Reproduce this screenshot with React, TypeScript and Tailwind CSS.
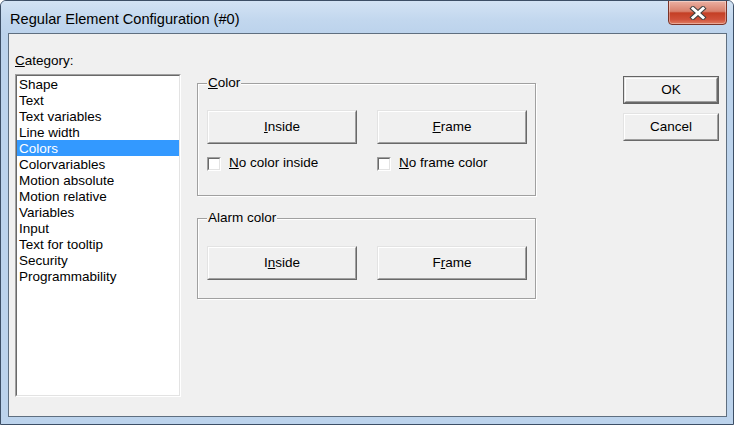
import React from "react";

const categories = [
  "Shape",
  "Text",
  "Text variables",
  "Line width",
  "Colors",
  "Colorvariables",
  "Motion absolute",
  "Motion relative",
  "Variables",
  "Input",
  "Text for tooltip",
  "Security",
  "Programmability",
];

function Button({
  children,
  w = "w-[150px]",
  h = "h-[34px]",
  isDefault = false,
}: {
  children: React.ReactNode;
  w?: string;
  h?: string;
  isDefault?: boolean;
}) {
  const body = (
    <div className="h-full w-full border border-t-[#e3e3e3] border-l-[#e3e3e3] border-r-[#696969] border-b-[#696969]">
      <div className="h-full w-full border border-t-white border-l-white border-r-[#a0a0a0] border-b-[#a0a0a0] flex items-center justify-center bg-[#f0f0f0]">
        <span>{children}</span>
      </div>
    </div>
  );
  if (isDefault) {
    return <div className={`${w} ${h} border border-[#646464]`}>{body}</div>;
  }
  return <div className={`${w} ${h}`}>{body}</div>;
}

function Checkbox({ children }: { children: React.ReactNode }) {
  return (
    <div className="flex items-center gap-[8px] h-[15px]">
      <div className="w-[14px] h-[14px] border border-t-[#a0a0a0] border-l-[#a0a0a0] border-r-white border-b-white">
        <div className="w-full h-full bg-white border border-t-[#696969] border-l-[#696969] border-r-[#e3e3e3] border-b-[#e3e3e3]" />
      </div>
      <span>{children}</span>
    </div>
  );
}

function GroupBox({
  label,
  h,
  pt,
  children,
}: {
  label: React.ReactNode;
  h: string;
  pt: string;
  children: React.ReactNode;
}) {
  return (
    <div
      className={`relative w-[339px] ${h} border border-[#a0a0a0] shadow-[inset_1px_1px_0_#fff,1px_1px_0_#fff] pl-[9px] ${pt}`}
    >
      <span className="absolute -top-[9px] left-[9px] bg-[#f0f0f0] px-[1px] leading-[16px]">
        {label}
      </span>
      {children}
    </div>
  );
}

function CloseGlyph() {
  return (
    <svg width="18" height="14" viewBox="0 0 18 14">
      <path d="M4 2.5 L14 11.5 M14 2.5 L4 11.5" stroke="#404040" strokeWidth="5" strokeLinecap="square" fill="none" />
      <path d="M4 2.5 L14 11.5 M14 2.5 L4 11.5" stroke="#ffffff" strokeWidth="3" strokeLinecap="square" fill="none" />
    </svg>
  );
}

export default function App() {
  return (
    <div className="w-[734px] h-[425px] bg-[#bcd3ec] border border-[#3d4f66] rounded-t-[6px] flex flex-col pl-[7px] pr-[6px] text-[13.5px] text-black font-['Liberation_Sans',Arial,sans-serif] overflow-hidden">
      {/* title bar */}
      <div className="h-[32px] -ml-[7px] -mr-[6px] pl-[9px] pr-[6px] flex items-start bg-[linear-gradient(180deg,#d3e3f4_0%,#c2d7ee_60%,#bcd3ec_100%)]">
        <span className="mt-[9px] text-[14.6px] leading-[18px] text-black">
          Regular Element Configuration (#0)
        </span>
        <div className="ml-auto -mt-[1px] w-[59px] h-[25px] rounded-b-[4px] border border-[#7a3327] bg-[linear-gradient(180deg,#ebb1a3_0%,#d8806c_45%,#c43f25_52%,#cf5039_80%,#e07e63_100%)] flex items-center justify-center shadow-[inset_0_0_0_1px_rgba(255,255,255,0.35)]">
          <CloseGlyph />
        </div>
      </div>

      {/* client area */}
      <div className="h-[384px] border border-[#5f6f80] bg-[#f0f0f0] flex items-start">
        {/* left column */}
        <div className="ml-[6px] w-[166px] flex flex-col">
          <div className="mt-[19px] leading-[16px] h-[16px]">
            <u>C</u>ategory:
          </div>
          <div className="mt-[5px] h-[323px] border border-t-[#a0a0a0] border-l-[#a0a0a0] border-r-white border-b-white">
            <div className="h-full bg-white border border-t-[#696969] border-l-[#696969] border-r-[#e3e3e3] border-b-[#e3e3e3]">
              {categories.map((c) => (
                <div
                  key={c}
                  className={`h-[16px] leading-[16px] pt-[1px] pl-[2px] whitespace-nowrap ${
                    c === "Colors" ? "bg-[#3399ff] text-white" : ""
                  }`}
                >
                  {c}
                </div>
              ))}
            </div>
          </div>
        </div>

        {/* middle column */}
        <div className="ml-[16px] mt-[49px] flex flex-col">
          <GroupBox label={<><u>C</u>olor</>} h="h-[113px]" pt="pt-[26px]">
            <div className="grid grid-cols-[150px_150px] gap-x-[20px]">
              <Button>
                <u>I</u>nside
              </Button>
              <Button>
                <u>F</u>rame
              </Button>
              <div className="mt-[12px]">
                <Checkbox>
                  <u>N</u>o color inside
                </Checkbox>
              </div>
              <div className="mt-[12px]">
                <Checkbox>
                  <u>N</u>o frame color
                </Checkbox>
              </div>
            </div>
          </GroupBox>

          <div className="mt-[22px]">
            <GroupBox label="Alarm color" h="h-[81px]" pt="pt-[27px]">
              <div className="grid grid-cols-[150px_150px] gap-x-[20px]">
                <Button>
                  I<u>n</u>side
                </Button>
                <Button>
                  F<u>r</u>ame
                </Button>
              </div>
            </GroupBox>
          </div>
        </div>

        {/* right column */}
        <div className="ml-[87px] mt-[42px] flex flex-col">
          <Button w="w-[96px]" h="h-[28px]" isDefault>
            OK
          </Button>
          <div className="mt-[9px]">
            <Button w="w-[96px]" h="h-[28px]">
              Cancel
            </Button>
          </div>
        </div>
      </div>
    </div>
  );
}
